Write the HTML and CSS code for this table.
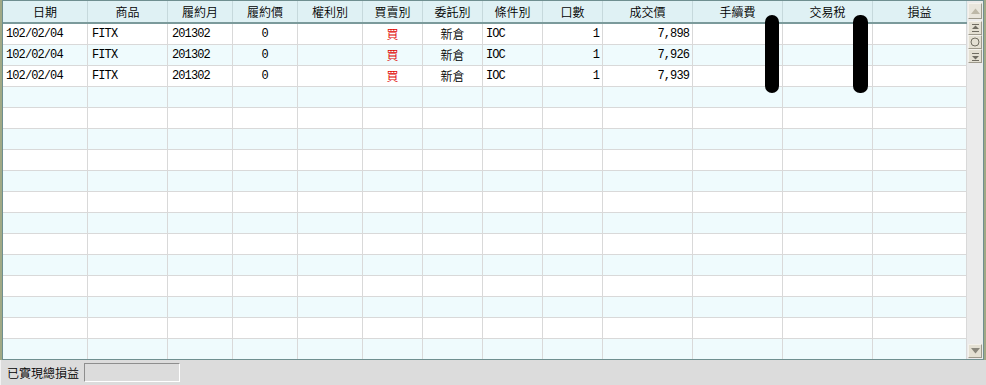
FILE: index.html
```html
<!DOCTYPE html>
<html lang="zh-Hant">
<head>
<meta charset="utf-8">
<title>已實現損益</title>
<link rel="stylesheet" href="styles.css">
</head>
<body>
<div class="app">
  <div class="frame">
    <div class="grid">
      <div class="table">
        <div class="row head">
          <div class="c">日期</div><div class="c">商品</div><div class="c">履約月</div><div class="c">履約價</div><div class="c">權利別</div><div class="c">買賣別</div><div class="c">委託別</div><div class="c">條件別</div><div class="c">口數</div><div class="c">成交價</div><div class="c">手續費</div><div class="c">交易稅</div><div class="c">損益</div>
        </div>
        <div class="row">
          <div class="c l">102/02/04</div><div class="c l">FITX</div><div class="c l">201302</div><div class="c m">0</div><div class="c"></div><div class="c cj red">買</div><div class="c cj">新倉</div><div class="c l">IOC</div><div class="c r">1</div><div class="c r">7,898</div><div class="c"></div><div class="c"></div><div class="c"></div>
        </div>
        <div class="row alt">
          <div class="c l">102/02/04</div><div class="c l">FITX</div><div class="c l">201302</div><div class="c m">0</div><div class="c"></div><div class="c cj red">買</div><div class="c cj">新倉</div><div class="c l">IOC</div><div class="c r">1</div><div class="c r">7,926</div><div class="c"></div><div class="c"></div><div class="c"></div>
        </div>
        <div class="row">
          <div class="c l">102/02/04</div><div class="c l">FITX</div><div class="c l">201302</div><div class="c m">0</div><div class="c"></div><div class="c cj red">買</div><div class="c cj">新倉</div><div class="c l">IOC</div><div class="c r">1</div><div class="c r">7,939</div><div class="c"></div><div class="c"></div><div class="c"></div>
        </div>
        <div class="row alt"><div class="c"></div><div class="c"></div><div class="c"></div><div class="c"></div><div class="c"></div><div class="c"></div><div class="c"></div><div class="c"></div><div class="c"></div><div class="c"></div><div class="c"></div><div class="c"></div><div class="c"></div></div>
        <div class="row"><div class="c"></div><div class="c"></div><div class="c"></div><div class="c"></div><div class="c"></div><div class="c"></div><div class="c"></div><div class="c"></div><div class="c"></div><div class="c"></div><div class="c"></div><div class="c"></div><div class="c"></div></div>
        <div class="row alt"><div class="c"></div><div class="c"></div><div class="c"></div><div class="c"></div><div class="c"></div><div class="c"></div><div class="c"></div><div class="c"></div><div class="c"></div><div class="c"></div><div class="c"></div><div class="c"></div><div class="c"></div></div>
        <div class="row"><div class="c"></div><div class="c"></div><div class="c"></div><div class="c"></div><div class="c"></div><div class="c"></div><div class="c"></div><div class="c"></div><div class="c"></div><div class="c"></div><div class="c"></div><div class="c"></div><div class="c"></div></div>
        <div class="row alt"><div class="c"></div><div class="c"></div><div class="c"></div><div class="c"></div><div class="c"></div><div class="c"></div><div class="c"></div><div class="c"></div><div class="c"></div><div class="c"></div><div class="c"></div><div class="c"></div><div class="c"></div></div>
        <div class="row"><div class="c"></div><div class="c"></div><div class="c"></div><div class="c"></div><div class="c"></div><div class="c"></div><div class="c"></div><div class="c"></div><div class="c"></div><div class="c"></div><div class="c"></div><div class="c"></div><div class="c"></div></div>
        <div class="row alt"><div class="c"></div><div class="c"></div><div class="c"></div><div class="c"></div><div class="c"></div><div class="c"></div><div class="c"></div><div class="c"></div><div class="c"></div><div class="c"></div><div class="c"></div><div class="c"></div><div class="c"></div></div>
        <div class="row"><div class="c"></div><div class="c"></div><div class="c"></div><div class="c"></div><div class="c"></div><div class="c"></div><div class="c"></div><div class="c"></div><div class="c"></div><div class="c"></div><div class="c"></div><div class="c"></div><div class="c"></div></div>
        <div class="row alt"><div class="c"></div><div class="c"></div><div class="c"></div><div class="c"></div><div class="c"></div><div class="c"></div><div class="c"></div><div class="c"></div><div class="c"></div><div class="c"></div><div class="c"></div><div class="c"></div><div class="c"></div></div>
        <div class="row"><div class="c"></div><div class="c"></div><div class="c"></div><div class="c"></div><div class="c"></div><div class="c"></div><div class="c"></div><div class="c"></div><div class="c"></div><div class="c"></div><div class="c"></div><div class="c"></div><div class="c"></div></div>
        <div class="row alt"><div class="c"></div><div class="c"></div><div class="c"></div><div class="c"></div><div class="c"></div><div class="c"></div><div class="c"></div><div class="c"></div><div class="c"></div><div class="c"></div><div class="c"></div><div class="c"></div><div class="c"></div></div>
        <div class="row"><div class="c"></div><div class="c"></div><div class="c"></div><div class="c"></div><div class="c"></div><div class="c"></div><div class="c"></div><div class="c"></div><div class="c"></div><div class="c"></div><div class="c"></div><div class="c"></div><div class="c"></div></div>
        <div class="row alt last"><div class="c"></div><div class="c"></div><div class="c"></div><div class="c"></div><div class="c"></div><div class="c"></div><div class="c"></div><div class="c"></div><div class="c"></div><div class="c"></div><div class="c"></div><div class="c"></div><div class="c"></div></div>
      </div>
      <div class="scroll">
        <div class="sbtn top dis">
          <svg width="9" height="6" viewBox="0 0 9 6"><path d="M0 6 L4.5 0.5 L9 6 Z" fill="#bdb8a8"/></svg>
        </div>
        <div class="sbtn first">
          <svg width="9" height="9" viewBox="0 0 9 9"><rect x="1" y="0" width="7" height="1" fill="#706d62"/><path d="M1 5 L4.5 1.5 L8 5 Z" fill="#706d62"/><rect x="1" y="7" width="7" height="1" fill="#706d62"/></svg>
        </div>
        <div class="sbtn mid">
          <svg width="10" height="10" viewBox="0 0 10 10"><circle cx="5" cy="5" r="4" fill="none" stroke="#706d62" stroke-width="1"/></svg>
        </div>
        <div class="sbtn lastb">
          <svg width="9" height="9" viewBox="0 0 9 9"><rect x="1" y="1" width="7" height="1" fill="#706d62"/><path d="M1 4 L4.5 7.5 L8 4 Z" fill="#706d62"/><rect x="1" y="8" width="7" height="1" fill="#706d62"/></svg>
        </div>
        <div class="track"></div>
        <div class="sbtn down">
          <svg width="9" height="6" viewBox="0 0 9 6"><path d="M0 0 L9 0 L4.5 5.5 Z" fill="#8a877c"/></svg>
        </div>
      </div>
      <div class="mark m1"></div>
      <div class="mark m2"></div>
    </div>
  </div>
  <div class="status">
    <span class="label">已實現總損益</span>
    <div class="box"></div>
  </div>
</div>
</body>
</html>
```

FILE: styles.css
```css
* { box-sizing: border-box; }
html, body { margin: 0; padding: 0; background: #dcdcdc; }
body { width: 986px; height: 385px; overflow: hidden; font-family: "Noto Sans CJK TC", "Liberation Sans", sans-serif; }

.app { width: 986px; height: 385px; display: flex; flex-direction: column; }

.frame { height: 360px; border-left: 2px solid #a0a985; border-right: 2px solid #a0a985; background: #fff; }

.grid { position: relative; height: 360px; border: 1px solid #6f8f90; display: flex; }

.table { width: 964px; display: flex; flex-direction: column; }

.row {
  display: grid;
  grid-template-columns: 85px 80px 65px 65px 65px 60px 60px 60px 60px 90px 90px 90px 94px;
  height: 21px;
  border-bottom: 1px solid #d9d9d9;
  background: #ffffff;
}
.row.alt { background: #effbfd; }
.row.last { height: 20px; border-bottom: none; }

.row.head {
  height: 23px;
  background: #dff1f4;
  border-bottom: 2px solid #7b9a9b;
}
.row.head .c {
  justify-content: center;
  font-family: "Noto Sans CJK TC", sans-serif;
  font-size: 12px;
  font-weight: 350;
  color: #000;
  border-right-color: #c6d9dc;
}

.c {
  border-right: 1px solid #d9d9d9;
  display: flex;
  align-items: center;
  font-size: 12px;
  line-height: 1;
  color: #000;
  white-space: nowrap;
  overflow: hidden;
}
.c.l {
  justify-content: flex-start;
  padding-left: 3px;
  font-family: "Liberation Mono", "DejaVu Sans Mono", monospace;
  font-size: 12px;
  letter-spacing: -0.9px;
}
.row .c.l + .c.l { padding-left: 4px; }
.c.m {
  justify-content: center;
  font-family: "Liberation Mono", monospace;
  font-size: 12px;
}
.c.cj {
  justify-content: center;
  font-family: "Noto Sans CJK TC", sans-serif;
  font-size: 12px;
  font-weight: 350;
}
.c.r {
  justify-content: flex-end;
  padding-right: 3px;
  font-family: "Liberation Mono", "DejaVu Sans Mono", monospace;
  font-size: 12px;
  letter-spacing: -0.9px;
}
.red { color: #e00000; }

.scroll {
  width: 16px;
  background: #ebebeb;
  display: flex;
  flex-direction: column;
  align-items: center;
  padding-top: 2px;
  padding-bottom: 1px;
}
.sbtn {
  width: 14px;
  height: 14px;
  background: #e4e0d3;
  border-top: 1px solid #f4f2ec;
  border-left: 1px solid #f4f2ec;
  border-bottom: 1px solid #9d998c;
  border-right: 1px solid #9d998c;
  display: flex;
  align-items: center;
  justify-content: center;
}
.sbtn.top { height: 16px; margin-bottom: 2px; }
.sbtn.dis { background: #e8e5dc; }
.track { flex: 1; }
.sbtn.down { height: 14px; }

.mark {
  position: absolute;
  top: 14px;
  width: 14px;
  height: 78px;
  background: #000;
  border-radius: 7px;
}
.m1 { left: 762px; }
.m2 { left: 850px; width: 15px; }

.status {
  height: 25px;
  display: flex;
  align-items: center;
  padding-left: 6px;
  background: #dcdcdc;
  border-left: 1px solid #f2f2f2;
}
.label { font-size: 12px; font-weight: 350; color: #000; }
.box {
  width: 96px;
  height: 19px;
  margin-left: 5px;
  background: #dcdcdc;
  border-top: 1px solid #8e8e8e;
  border-left: 1px solid #8e8e8e;
  border-right: 1px solid #ffffff;
  border-bottom: 1px solid #ffffff;
}
```
